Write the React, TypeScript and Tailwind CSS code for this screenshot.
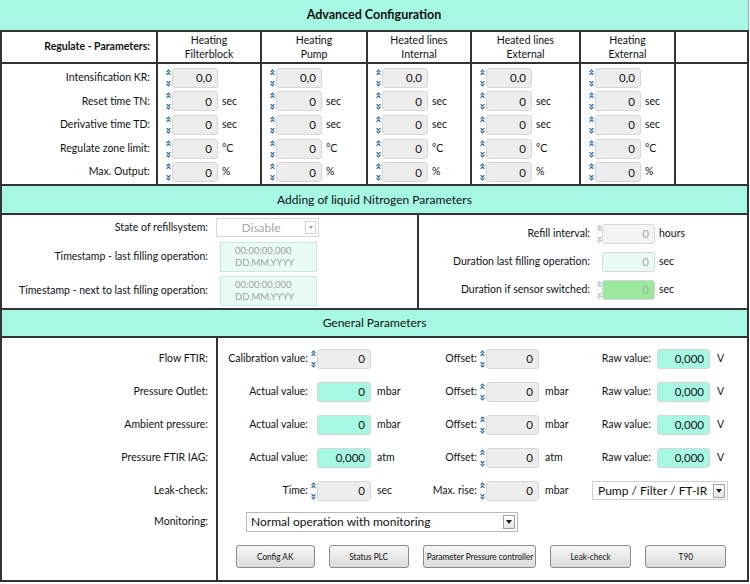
import React from "react";

const TEAL = "bg-[#a7f8e3]";

function Spinner({ faded = false }: { faded?: boolean }) {
  const c = faded ? "#a9b8cc" : "#2d64a6";
  return (
    <svg width="5" height="18" viewBox="0 0 5 18" className="shrink-0">
      <path d="M0.6 3.2 L2.5 1.2 L4.4 3.2 M0.6 5.8 L2.5 3.8 L4.4 5.8" stroke={c} strokeWidth="1.2" fill="none" />
      <path d="M0.6 12.2 L2.5 14.2 L4.4 12.2 M0.6 14.8 L2.5 16.8 L4.4 14.8" stroke={c} strokeWidth="1.2" fill="none" />
    </svg>
  );
}

function Box({ value, w, tone = "gray", dim = false }: { value: string; w: string; tone?: "gray" | "teal" | "mint" | "green" | "light"; dim?: boolean }) {
  const bg =
    tone === "teal"
      ? "bg-[#a7f8e3]"
      : tone === "mint"
      ? "bg-[#e8fcf5]"
      : tone === "green"
      ? "bg-[#9ae99e]"
      : tone === "light"
      ? "bg-[#f4f4f4]"
      : "bg-[#ededed]";
  return (
    <div
      className={`${w} h-[20px] ${bg} border border-[#d6d6d6] rounded-[3px] flex items-center justify-end pr-[5px] text-[11.5px] ${
        dim ? "text-[#a8a8a8]" : "text-[#111]"
      }`}
    >
      {value}
    </div>
  );
}

function Arrow() {
  return (
    <div className="w-[12px] h-[14px] border border-[#a0a0a0] bg-gradient-to-b from-white to-[#e4e4e4] flex items-center justify-center shrink-0">
      <div className="w-0 h-0 border-x-[3px] border-x-transparent border-t-[4px] border-t-[#222]" />
    </div>
  );
}

const COLS = [
  ["Heating", "Filterblock"],
  ["Heating", "Pump"],
  ["Heated lines", "Internal"],
  ["Heated lines", "External"],
  ["Heating", "External"],
];

const ROWS = [
  { label: "Intensification KR:", value: "0,0", unit: "" },
  { label: "Reset time TN:", value: "0", unit: "sec" },
  { label: "Derivative time TD:", value: "0", unit: "sec" },
  { label: "Regulate zone limit:", value: "0", unit: "°C" },
  { label: "Max. Output:", value: "0", unit: "%" },
];

function Btn({ w, children }: { w: string; children: React.ReactNode }) {
  return (
    <div className={`${w} h-[23px] border border-[#8a8a8a] rounded-[3px] bg-gradient-to-b from-[#f6f6f6] to-[#dcdcdc] flex items-center justify-center text-[10px] whitespace-nowrap`}>
      <span className="scale-x-[0.82] inline-block">{children}</span>
    </div>
  );
}

type GRow = {
  label: string;
  l1: string;
  v1: string;
  t1: "gray" | "teal";
  s1: boolean;
  u1: string;
  l2: string;
  v2: string;
  u2: string;
  last: "raw" | "select";
};

const GROWS: GRow[] = [
  { label: "Flow FTIR:", l1: "Calibration value:", v1: "0", t1: "gray", s1: true, u1: "", l2: "Offset:", v2: "0", u2: "", last: "raw" },
  { label: "Pressure Outlet:", l1: "Actual value:", v1: "0", t1: "teal", s1: false, u1: "mbar", l2: "Offset:", v2: "0", u2: "mbar", last: "raw" },
  { label: "Ambient pressure:", l1: "Actual value:", v1: "0", t1: "teal", s1: false, u1: "mbar", l2: "Offset:", v2: "0", u2: "mbar", last: "raw" },
  { label: "Pressure FTIR IAG:", l1: "Actual value:", v1: "0,000", t1: "teal", s1: false, u1: "atm", l2: "Offset:", v2: "0", u2: "atm", last: "raw" },
  { label: "Leak-check:", l1: "Time:", v1: "0", t1: "gray", s1: true, u1: "sec", l2: "Max. rise:", v2: "0", u2: "mbar", last: "select" },
];

export default function App() {
  return (
    <div className="w-[750px] h-[584px] bg-white font-['Lato','Liberation_Sans',sans-serif] text-[10.5px] text-[#111]">
      <div className="w-[749px]">
        {/* title */}
        <div className={`h-[30px] ${TEAL} border-r border-[#8fb8ae] flex items-center justify-center font-bold text-[12.5px]`}>
          Advanced Configuration
        </div>

        {/* regulate parameters table */}
        <div className="border-2 border-[#333] grid grid-cols-[156px_104px_106px_104px_109px_95px_1fr]">
          <div className="h-[32px] border-r-2 border-b-2 border-[#333] flex items-center justify-end pr-[6px] font-bold">
            Regulate - Parameters:
          </div>
          {COLS.map(([a, b], i) => (
            <div key={i} className="h-[32px] border-r-2 border-b-2 border-[#333] flex flex-col items-center justify-center leading-[14px]">
              <span>{a}</span>
              <span>{b}</span>
            </div>
          ))}
          <div className="h-[32px] border-b-2 border-[#333]" />

          <div className="h-[120px] border-r-2 border-[#333] pt-[2px] flex flex-col">
            {ROWS.map((r) => (
              <div key={r.label} className="h-[24px] flex items-center justify-end pr-[6px]">
                {r.label}
              </div>
            ))}
          </div>
          {COLS.map((_, i) => (
            <div key={i} className="h-[120px] border-r-2 border-[#333] pt-[2px] flex flex-col">
              {ROWS.map((r) => (
                <div key={r.label} className="h-[24px] flex items-center pl-[8px]">
                  <Spinner />
                  <div className="w-[1px]" />
                  <Box value={r.value} w="w-[46px]" />
                  <span className="ml-[4px]">{r.unit}</span>
                </div>
              ))}
            </div>
          ))}
          <div className="h-[120px]" />
        </div>

        {/* nitrogen */}
        <div className={`h-[27px] ${TEAL} border-x-2 border-[#333] flex items-center justify-center text-[12px]`}>
          Adding of liquid Nitrogen Parameters
        </div>
        <div className="h-[97px] border-2 border-[#333] grid grid-cols-[417px_1fr]">
          <div className="border-r-2 border-[#333] pt-[3px] flex flex-col">
            <div className="h-[19px] flex items-center">
              <span className="w-[206px] text-right">State of refillsystem:</span>
              <div className="ml-[8px] w-[103px] h-[19px] border border-[#d8d8d8] bg-white flex items-center pr-[2px]">
                <span className="flex-1 text-center text-[#a8a8a8] text-[12px]">Disable</span>
                <div className="w-[11px] h-[13px] border border-[#d0d0d0] flex items-center justify-center">
                  <div className="w-0 h-0 border-x-[2.5px] border-x-transparent border-t-[3px] border-t-[#999]" />
                </div>
              </div>
            </div>
            <div className="h-[30px] mt-[5px] flex items-center">
              <span className="w-[206px] text-right">Timestamp - last filling operation:</span>
              <div className="ml-[12px] w-[97px] h-[30px] bg-[#e8fcf5] border border-[#c9e9df] flex flex-col justify-center pl-[14px] text-[9.5px] leading-[12px] text-[#a0a0a0]">
                <span>00:00:00,000</span>
                <span>DD.MM.YYYY</span>
              </div>
            </div>
            <div className="h-[30px] mt-[4px] flex items-center">
              <span className="w-[206px] text-right whitespace-nowrap">Timestamp - next to last filling operation:</span>
              <div className="ml-[12px] w-[97px] h-[30px] bg-[#e8fcf5] border border-[#c9e9df] flex flex-col justify-center pl-[14px] text-[9.5px] leading-[12px] text-[#a0a0a0]">
                <span>00:00:00,000</span>
                <span>DD.MM.YYYY</span>
              </div>
            </div>
          </div>
          <div className="pt-[9px] flex flex-col gap-[8px]">
            <div className="h-[20px] flex items-center">
              <span className="w-[171px] text-right">Refill interval:</span>
              <div className="ml-[7px] w-[5px]">
                <Spinner faded />
              </div>
              <Box value="0" w="w-[53px]" tone="light" dim />
              <span className="ml-[4px]">hours</span>
            </div>
            <div className="h-[20px] flex items-center">
              <span className="w-[171px] text-right">Duration last filling operation:</span>
              <div className="ml-[7px] w-[5px]" />
              <Box value="0" w="w-[53px]" tone="mint" dim />
              <span className="ml-[4px]">sec</span>
            </div>
            <div className="h-[20px] flex items-center">
              <span className="w-[171px] text-right">Duration if sensor switched:</span>
              <div className="ml-[7px] w-[5px]">
                <Spinner faded />
              </div>
              <Box value="0" w="w-[53px]" tone="green" dim />
              <span className="ml-[4px]">sec</span>
            </div>
          </div>
        </div>

        {/* general */}
        <div className={`h-[26px] ${TEAL} border-x-2 border-[#333] flex items-center justify-center text-[12px]`}>
          General Parameters
        </div>
        <div className="h-[246px] border-2 border-[#333] flex">
          <div className="w-[216px] border-r-2 border-[#333] pt-[4px] flex flex-col">
            {GROWS.map((g) => (
              <div key={g.label} className="h-[33px] flex items-center justify-end pr-[8px]">
                {g.label}
              </div>
            ))}
            <div className="h-[30px] flex items-center justify-end pr-[8px]">Monitoring:</div>
          </div>
          <div className="flex-1 pt-[4px] flex flex-col">
            {GROWS.map((g) => (
              <div key={g.label} className="h-[33px] flex items-center">
                <span className="w-[90px] text-right whitespace-nowrap">{g.l1}</span>
                <div className="w-[9px] pl-[3px]">{g.s1 && <Spinner />}</div>
                <Box value={g.v1} w="w-[54px]" tone={g.t1} />
                <span className="w-[50px] pl-[6px]">{g.u1}</span>
                <span className="w-[56px] text-right whitespace-nowrap">{g.l2}</span>
                <div className="w-[9px] pl-[3px]">
                  <Spinner />
                </div>
                <Box value={g.v2} w="w-[53px]" />
                <span className="w-[56px] pl-[6px]">{g.u2}</span>
                {g.last === "raw" ? (
                  <>
                    <span className="w-[56px] text-right whitespace-nowrap">Raw value:</span>
                    <div className="w-[6px]" />
                    <Box value="0,000" w="w-[53px]" tone="teal" />
                    <span className="pl-[7px]">V</span>
                  </>
                ) : (
                  <div className="-ml-[3px] w-[136px] h-[19px] border border-[#d0d0d0] bg-white flex items-center pl-[5px] pr-[2px]">
                    <span className="flex-1 text-[12px] whitespace-nowrap">Pump / Filter / FT-IR</span>
                    <Arrow />
                  </div>
                )}
              </div>
            ))}
            <div className="h-[30px] flex items-center">
              <div className="ml-[28px] w-[272px] h-[20px] border border-[#b8b8b8] bg-white flex items-center pl-[4px] pr-[2px]">
                <span className="flex-1 text-[12px] whitespace-nowrap">Normal operation with monitoring</span>
                <Arrow />
              </div>
            </div>
            <div className="mt-[8px] ml-[18px] flex gap-[14px]">
              <Btn w="w-[79px]">Config AK</Btn>
              <Btn w="w-[80px]">Status PLC</Btn>
              <Btn w="w-[113px]">Parameter Pressure controller</Btn>
              <Btn w="w-[81px]">Leak-check</Btn>
              <Btn w="w-[81px]">T90</Btn>
            </div>
          </div>
        </div>
      </div>
    </div>
  );
}
